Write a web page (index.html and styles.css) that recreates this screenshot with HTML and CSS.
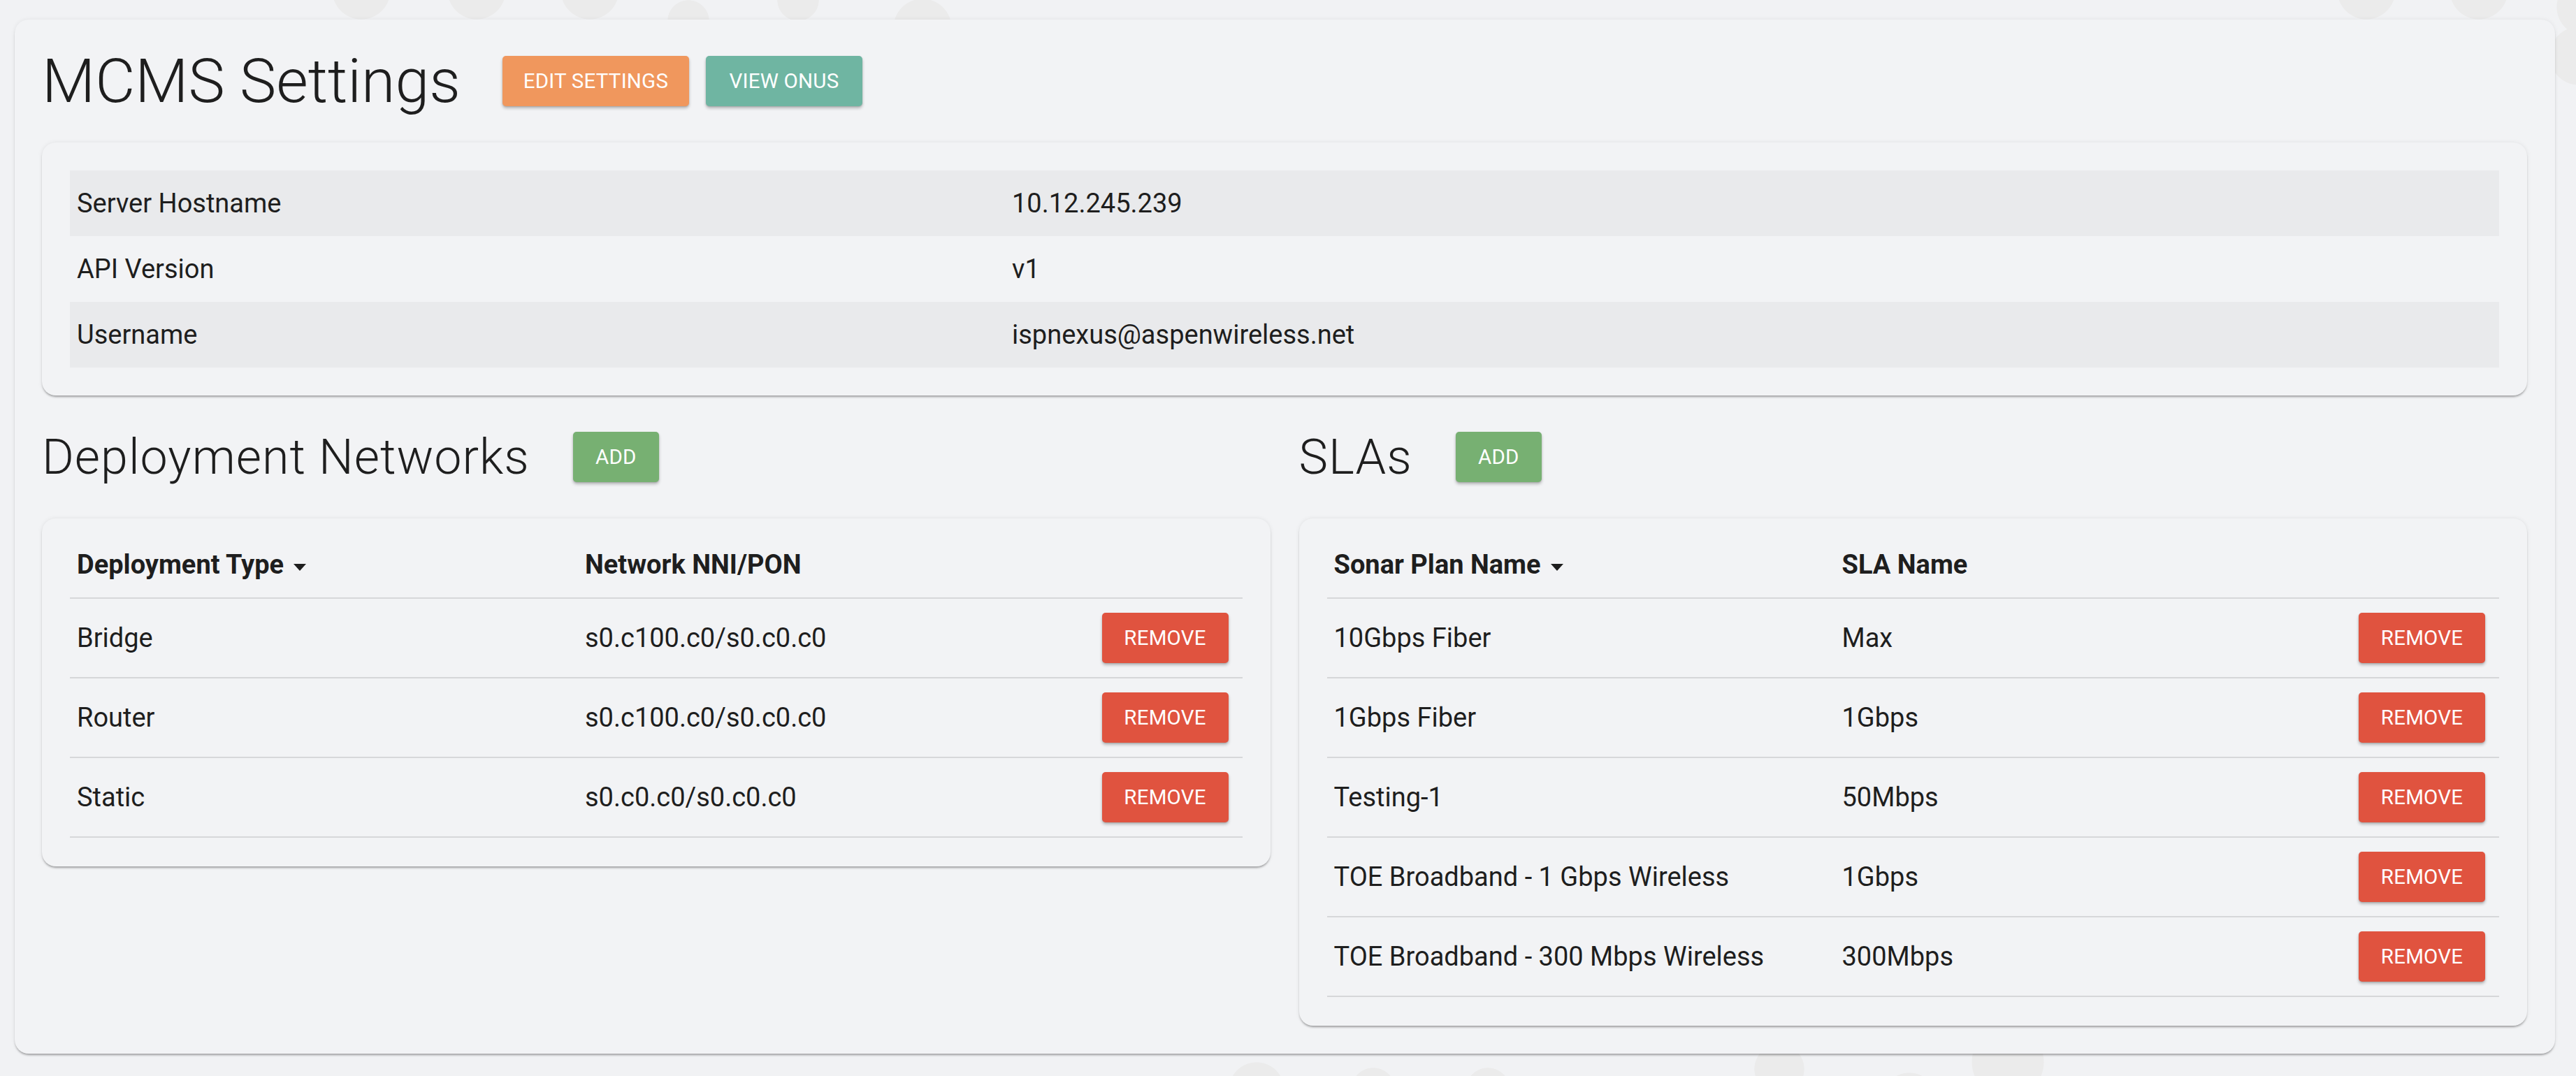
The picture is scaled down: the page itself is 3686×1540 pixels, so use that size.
FILE: index.html
```html
<!DOCTYPE html>
<html lang="en">
<head>
<meta charset="utf-8">
<title>MCMS Settings</title>
<link rel="stylesheet" href="styles.css">
</head>
<body>
<main class="page-card">
  <header class="title-row">
    <h1 class="page-title">MCMS Settings</h1>
    <button class="btn btn-orange btn-first">Edit Settings</button>
    <button class="btn btn-teal btn-next">View ONUs</button>
  </header>

  <section class="card info-card">
    <table class="info-table">
      <tr><td class="info-key">Server Hostname</td><td>10.12.245.239</td></tr>
      <tr><td class="info-key">API Version</td><td>v1</td></tr>
      <tr><td class="info-key">Username</td><td>ispnexus@aspenwireless.net</td></tr>
    </table>
  </section>

  <div class="columns">
    <div class="column">
      <div class="section-row">
        <h2 class="section-title">Deployment Networks</h2>
        <button class="btn btn-green btn-add">Add</button>
      </div>
      <section class="card list-card">
        <table class="list-table">
          <thead>
            <tr>
              <th class="col-first">Deployment Type<span class="caret"></span></th>
              <th>Network NNI/PON</th>
              <th class="col-action"></th>
            </tr>
          </thead>
          <tbody>
            <tr><td>Bridge</td><td>s0.c100.c0/s0.c0.c0</td><td class="col-action"><button class="btn btn-red">Remove</button></td></tr>
            <tr><td>Router</td><td>s0.c100.c0/s0.c0.c0</td><td class="col-action"><button class="btn btn-red">Remove</button></td></tr>
            <tr><td>Static</td><td>s0.c0.c0/s0.c0.c0</td><td class="col-action"><button class="btn btn-red">Remove</button></td></tr>
          </tbody>
        </table>
      </section>
    </div>

    <div class="column">
      <div class="section-row">
        <h2 class="section-title">SLAs</h2>
        <button class="btn btn-green btn-add">Add</button>
      </div>
      <section class="card list-card">
        <table class="list-table">
          <thead>
            <tr>
              <th class="col-first">Sonar Plan Name<span class="caret"></span></th>
              <th>SLA Name</th>
              <th class="col-action"></th>
            </tr>
          </thead>
          <tbody>
            <tr><td>10Gbps Fiber</td><td>Max</td><td class="col-action"><button class="btn btn-red">Remove</button></td></tr>
            <tr><td>1Gbps Fiber</td><td>1Gbps</td><td class="col-action"><button class="btn btn-red">Remove</button></td></tr>
            <tr><td>Testing-1</td><td>50Mbps</td><td class="col-action"><button class="btn btn-red">Remove</button></td></tr>
            <tr><td>TOE Broadband - 1 Gbps Wireless</td><td>1Gbps</td><td class="col-action"><button class="btn btn-red">Remove</button></td></tr>
            <tr><td>TOE Broadband - 300 Mbps Wireless</td><td>300Mbps</td><td class="col-action"><button class="btn btn-red">Remove</button></td></tr>
          </tbody>
        </table>
      </section>
    </div>
  </div>
</main>
</body>
</html>
```
FILE: styles.css
```css
* { box-sizing: border-box; }

html, body { height: 100%; }

body {
  margin: 0;
  font-family: Roboto, "Liberation Sans", sans-serif;
  color: #1e1e1e;
  background-color: #f1f2f4;
  background-image:
    radial-gradient(circle 42px at 517px -14px, #ebebeb 98%, transparent 100%),
    radial-gradient(circle 42px at 682px -14px, #ebebeb 98%, transparent 100%),
    radial-gradient(circle 42px at 844px -14px, #ebebeb 98%, transparent 100%),
    radial-gradient(circle 30px at 985px 30px, #ebebeb 98%, transparent 100%),
    radial-gradient(circle 30px at 1142px 0px, #ebebeb 98%, transparent 100%),
    radial-gradient(circle 42px at 1320px 40px, #ebebeb 98%, transparent 100%),
    radial-gradient(circle 42px at 3386px -14px, #ebebeb 98%, transparent 100%),
    radial-gradient(circle 42px at 3547px -14px, #ebebeb 98%, transparent 100%),
    radial-gradient(circle 42px at 3700px 10px, #ebebeb 98%, transparent 100%),
    radial-gradient(circle 42px at 3690px 80px, #ebebeb 98%, transparent 100%),
    radial-gradient(circle 40px at 30px 1580px, #ebebeb 98%, transparent 100%),
    radial-gradient(circle 40px at 1798px 1560px, #ebebeb 98%, transparent 100%),
    radial-gradient(circle 32px at 1965px 1560px, #ebebeb 98%, transparent 100%),
    radial-gradient(circle 32px at 2129px 1560px, #ebebeb 98%, transparent 100%),
    radial-gradient(circle 36px at 2546px 1530px, #ebebeb 98%, transparent 100%),
    radial-gradient(circle 40px at 2732px 1575px, #ebebeb 98%, transparent 100%),
    radial-gradient(circle 52px at 2873px 1520px, #ebebeb 98%, transparent 100%);
  background-repeat: no-repeat;
}

.page-card {
  margin: 28px 30px 32px 21px;
  padding: 52px 40px 40px 39px;
  background: #f2f3f5;
  border-radius: 20px;
  box-shadow: 0 3px 3px -1px rgba(0, 0, 0, 0.32), 0 0 6px rgba(0, 0, 0, 0.07);
}

.title-row {
  display: flex;
  align-items: flex-start;
  height: 72px;
}

.page-title {
  margin: 0;
  font-size: 88px;
  line-height: 72px;
  font-weight: 300;
  letter-spacing: 0;
  white-space: nowrap;
}

.btn {
  display: inline-block;
  height: 72px;
  line-height: 72px;
  padding: 0 33px;
  border: none;
  border-radius: 5px;
  font-family: Roboto, "Liberation Sans", sans-serif;
  font-size: 29.5px;
  font-weight: 400;
  color: #fff;
  text-transform: uppercase;
  letter-spacing: 0.2px;
  white-space: nowrap;
  box-shadow: 0 3px 4px rgba(0, 0, 0, 0.24), 0 1px 2px rgba(0, 0, 0, 0.12);
  cursor: pointer;
}

.btn-orange { background: #f0975d; }
.btn-teal { background: #6fb5a2; }
.btn-green { background: #77b072; }
.btn-red { background: #e0533f; }

.btn-first { margin-left: 60px; width: 267px; padding: 0; text-align: center; }
.btn-next { margin-left: 24px; width: 224px; padding: 0; text-align: center; }

.card {
  background: #f2f3f5;
  border-radius: 20px;
  padding: 40px;
  box-shadow: 0 3px 3px -1px rgba(0, 0, 0, 0.32), 0 0 6px rgba(0, 0, 0, 0.08);
}

.info-card { margin-top: 52px; }

.info-table {
  width: 100%;
  border-collapse: collapse;
  font-size: 38px;
}

.info-table td {
  height: 94px;
  padding: 0 10px;
  vertical-align: middle;
}

.info-table tr:nth-child(odd) { background: #e9eaec; }

.info-key { width: 1338px; }

.columns {
  display: grid;
  grid-template-columns: 1fr 1fr;
  column-gap: 41px;
  margin-top: 52px;
  align-items: start;
}

.section-row {
  display: flex;
  align-items: flex-start;
  height: 72px;
}

.section-title {
  margin: 0;
  font-size: 70px;
  line-height: 72px;
  font-weight: 300;
  letter-spacing: 1px;
  white-space: nowrap;
}

.btn-add { margin-left: 62px; width: 123px; padding: 0; text-align: center; }

.list-card { margin-top: 52px; padding-bottom: 41px; }

.list-table {
  width: 100%;
  border-collapse: separate;
  border-spacing: 0;
  font-size: 38px;
}

.list-table th {
  height: 75px;
  padding: 7px 10px 0;
  line-height: 38px;
  text-align: left;
  font-weight: 700;
  vertical-align: top;
  border-bottom: 2px solid #d6d7d9;
  white-space: nowrap;
}

.list-table td {
  height: 114px;
  padding: 0 10px;
  vertical-align: middle;
  border-bottom: 2px solid #d6d7d9;
  white-space: nowrap;
}

.list-table .col-first { width: 727px; }

.list-table .col-action {
  width: 1%;
  text-align: right;
  padding-right: 20px;
}

.list-table td .btn-red { width: 181px; padding: 0; text-align: center; }

.caret {
  display: inline-block;
  margin-left: 14px;
  width: 0;
  height: 0;
  border-left: 9px solid transparent;
  border-right: 9px solid transparent;
  border-top: 10px solid #1e1e1e;
  vertical-align: 4px;
}
```
